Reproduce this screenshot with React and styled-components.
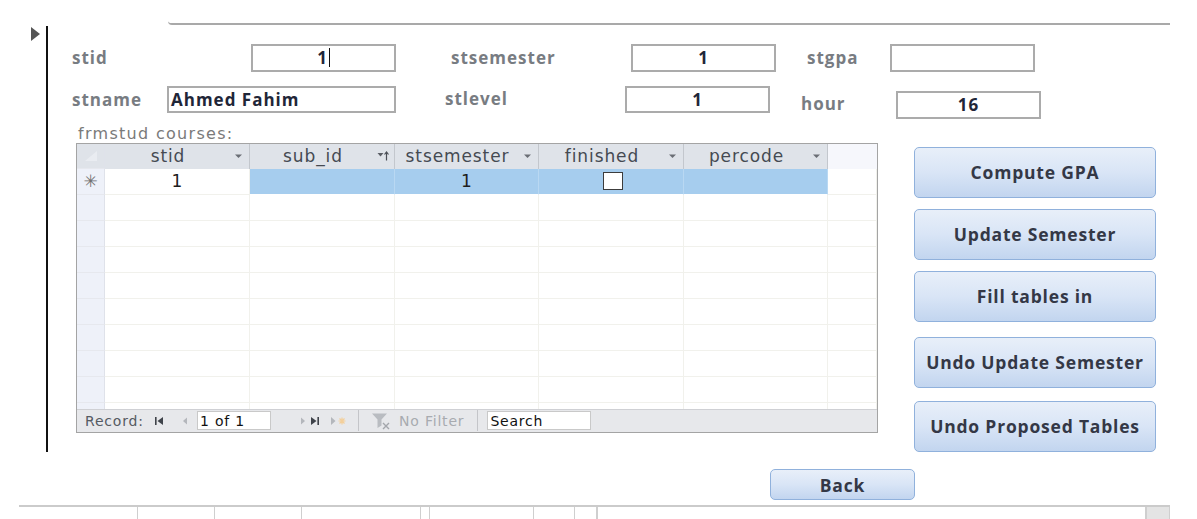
import React from 'react';
import styled, {createGlobalStyle} from 'styled-components';

const GlobalStyle = createGlobalStyle`
    html, body {
        margin: 0;
        padding: 0;
        background: #ffffff;
    }
    body {
        font-family: "Open Sans", "Liberation Sans", sans-serif;
    }
`;

const Page = styled.div`
    width: 1197px;
    height: 519px;
    overflow: hidden;
    display: flex;
    flex-direction: column;
`;

const TopRule = styled.div`
    margin-left: 168px;
    margin-top: 2px;
    width: 1002px;
    height: 21px;
    border-bottom: 2px solid #a9a9a9;
    border-bottom-left-radius: 4px;
`;

const Body = styled.div`
    display: flex;
    height: 429px;
    margin-top: 1px;
`;

const Gutter = styled.div`
    width: 46px;
    display: flex;
    justify-content: flex-end;
    padding-right: 6px;
    box-sizing: border-box;
    padding-top: 1px;
`;

const RecordArrow = styled.div`
    width: 0;
    height: 0;
    border-top: 7px solid transparent;
    border-bottom: 7px solid transparent;
    border-left: 9px solid #555555;
`;

const FormArea = styled.div`
    flex: 1;
    border-left: 2px solid #111111;
    display: flex;
    flex-direction: column;
    padding-top: 18px;
`;

const FieldRow = styled.div`
    display: flex;
    align-items: flex-start;
    padding-left: 24px;
    margin-top: ${p => p.$mt || 0}px;
`;

const Group = styled.div`
    display: flex;
    align-items: center;
    margin-left: ${p => p.$gap || 0}px;
    margin-top: ${p => p.$shift || 0}px;
`;

const Label = styled.div`
    width: ${p => p.$w}px;
    font-family: "Open Sans", "Liberation Sans", sans-serif;
    font-weight: 700;
    font-size: 17px;
    letter-spacing: 1px;
    color: #787c82;
    box-sizing: border-box;
    margin-top: ${p => p.$lift || 0}px;
`;

const Field = styled.div`
    width: ${p => p.$w || 145}px;
    height: ${p => p.$h || 28}px;
    box-sizing: border-box;
    border: 2px solid #ababab;
    background: #ffffff;
    display: flex;
    align-items: center;
    justify-content: ${p => (p.$left ? 'flex-start' : 'center')};
    padding-left: ${p => (p.$left ? 2 : 0)}px;
    font-family: "Open Sans", "Liberation Sans", sans-serif;
    font-weight: 700;
    font-size: 17px;
    letter-spacing: 1px;
    color: #1f2638;
`;

const Caret = styled.span`
    display: inline-block;
    width: 1px;
    height: 19px;
    background: #111111;
    margin-left: 1px;
`;

const Main = styled.div`
    display: flex;
    align-items: flex-start;
    margin-top: 5px;
    padding-left: 28px;
`;

const SubformBlock = styled.div`
    display: flex;
    flex-direction: column;
    width: 802px;
`;

const SubformTitle = styled.div`
    font-family: "DejaVu Sans", "Liberation Sans", sans-serif;
    font-size: 16px;
    letter-spacing: 1.3px;
    line-height: 19px;
    color: #7a7a7a;
    padding-left: 2px;
`;

const Datasheet = styled.div`
    height: 290px;
    border: 1px solid #a4a4a4;
    box-sizing: border-box;
    display: flex;
    flex-direction: column;
    background: #ffffff;
    font-family: "DejaVu Sans", "Liberation Sans", sans-serif;
`;

const cols = '28px 145px 145px 144px 145px 144px 1fr';

const HeaderRow = styled.div`
    display: grid;
    grid-template-columns: ${cols};
    height: 25px;
    flex-shrink: 0;
`;

const HeadCell = styled.div`
    background: ${p => (p.$blank ? '#f6f7fc' : '#dfe3e9')};
    border-right: ${p => (p.$blank ? 'none' : '1px solid #c3c7cd')};
    display: flex;
    align-items: center;
    font-size: 17px;
    letter-spacing: 0.9px;
    color: #454a52;
    overflow: hidden;
`;

const HeadText = styled.span`
    flex: 1;
    text-align: center;
    padding-left: 4px;
`;

const HeadIcon = styled.span`
    width: 22px;
    display: flex;
    align-items: center;
    justify-content: center;
`;

const BodyArea = styled.div`
    flex: 1;
    overflow: hidden;
`;

const DataRow = styled.div`
    display: grid;
    grid-template-columns: ${cols};
    height: ${p => p.$h || 26}px;
`;

const Cell = styled.div`
    box-sizing: border-box;
    background: ${p => (p.$sel ? '#a6cdee' : '#ffffff')};
    border-right: 1px solid ${p => (p.$sel ? '#b9d8f2' : '#f1f1ec')};
    border-bottom: 1px solid ${p => (p.$sel ? '#ffffff' : '#f1f1ec')};
    display: flex;
    align-items: center;
    justify-content: center;
    font-size: 17px;
    color: #1d1d1d;
`;

const Selector = styled.div`
    box-sizing: border-box;
    background: ${p => (p.$head ? '#dfe3e9' : '#eef1f9')};
    border-right: 1px solid #dfe2ea;
    border-bottom: 1px solid #e6e8ee;
    display: flex;
    align-items: center;
    justify-content: center;
    font-size: 17px;
    color: #707070;
`;

const CheckBox = styled.span`
    width: 18px;
    height: 16px;
    border: 1.5px solid #3c3c3c;
    background: #ffffff;
    margin-left: 3px;
`;

const NavBar = styled.div`
    height: 23px;
    flex-shrink: 0;
    background: #e7e8eb;
    border-top: 1px solid #cfd0d4;
    box-sizing: border-box;
    display: flex;
    align-items: center;
    font-size: 14px;
    letter-spacing: 0.8px;
    color: #555a62;
`;

const NavLabel = styled.span`
    padding-left: 8px;
    width: 69px;
`;

const NavBtn = styled.span`
    display: flex;
    align-items: center;
    margin-left: ${p => p.$ml || 0}px;
`;

const NavBox = styled.div`
    width: ${p => p.$w}px;
    height: 19px;
    box-sizing: border-box;
    border: 1px solid #c9c9c9;
    background: #ffffff;
    color: #111111;
    display: flex;
    align-items: center;
    padding-left: 2px;
    margin-left: ${p => p.$ml || 0}px;
`;

const NavSep = styled.span`
    width: 1px;
    height: 21px;
    background: #c4c5c9;
    margin-left: ${p => p.$ml || 0}px;
`;

const FilterText = styled.span`
    color: #a8abb0;
    margin-left: 6px;
`;

const ButtonColumn = styled.div`
    display: flex;
    flex-direction: column;
    margin-left: 36px;
    margin-top: 23px;
`;

const ActionButton = styled.button`
    width: ${p => p.$w || 242}px;
    height: ${p => p.$h || 51}px;
    margin-top: ${p => p.$mt || 0}px;
    border: 1px solid #90b1dc;
    border-radius: 5px;
    background: linear-gradient(to bottom, #e8eff9 0%, #d9e5f6 50%, #c2d5ef 100%);
    font-family: "Open Sans", "Liberation Sans", sans-serif;
    font-weight: 700;
    font-size: 17.5px;
    letter-spacing: 0.8px;
    color: #343846;
    cursor: pointer;
    padding: 0;
`;

const BackRow = styled.div`
    display: flex;
    padding-left: 770px;
    margin-top: 17px;
`;

const StatusStrip = styled.div`
    margin-top: 5px;
    margin-left: 19px;
    width: 1151px;
    height: 12px;
    border-top: 2px solid #cbcbcb;
    display: flex;
`;

const StatusSeg = styled.div`
    width: ${p => p.$w}px;
    margin-left: ${p => p.$ml || 0}px;
    border-left: 1px solid #cfcfcf;
    border-right: 1px solid #cfcfcf;
    background: ${p => p.$fill || 'transparent'};
`;

const SortDown = () => (
    <svg width="9" height="6" viewBox="0 0 9 6">
        <path d="M1 1.5h7L4.5 5z" fill="#6a6e75"/>
    </svg>
);

const SortAsc = () => (
    <svg width="13" height="10" viewBox="0 0 13 10">
        <path d="M0.5 2h6L3.5 5.5z" fill="#5a5e65"/>
        <path d="M9.5 9.5V1.5M7.5 3.5l2-2.5 2 2.5" stroke="#4a4e55" strokeWidth="1.2" fill="none"/>
    </svg>
);

const CornerMark = () => (
    <svg width="14" height="12" viewBox="0 0 14 12">
        <path d="M13 1L1 11h12z" fill="#e9ecf1"/>
    </svg>
);

const FirstIcon = () => (
    <svg width="10" height="10" viewBox="0 0 10 10">
        <rect x="1" y="1" width="1.6" height="8" fill="#3f434a"/>
        <path d="M9 1v8L3.5 5z" fill="#3f434a"/>
    </svg>
);

const PrevIcon = () => (
    <svg width="8" height="10" viewBox="0 0 8 10">
        <path d="M6 1.5v7L2 5z" fill="#b4b7bc"/>
    </svg>
);

const NextIcon = () => (
    <svg width="8" height="10" viewBox="0 0 8 10">
        <path d="M2 1.5v7L6 5z" fill="#b4b7bc"/>
    </svg>
);

const LastIcon = () => (
    <svg width="10" height="10" viewBox="0 0 10 10">
        <path d="M1 1v8L6.5 5z" fill="#3f434a"/>
        <rect x="7.4" y="1" width="1.6" height="8" fill="#3f434a"/>
    </svg>
);

const NewIcon = () => (
    <svg width="18" height="12" viewBox="0 0 18 12">
        <path d="M1 2v8L5.5 6z" fill="#b4b7bc"/>
        <path d="M12 2.5v7M8.5 6h7M9.5 3.5l5 5M14.5 3.5l-5 5" stroke="#f3cf9b" strokeWidth="1.2"/>
    </svg>
);

const FilterIcon = () => (
    <svg width="22" height="18" viewBox="0 0 22 18">
        <path d="M1 1.5h15l-5.5 6v6l-4 2.5v-8.5z" fill="#b9bcc1"/>
        <path d="M12 11l6 6M18 11l-6 6" stroke="#a3a6ab" strokeWidth="1.4"/>
    </svg>
);

const headers = [
    {name: 'stid', icon: <SortDown/>},
    {name: 'sub_id', icon: <SortAsc/>},
    {name: 'stsemester', icon: <SortDown/>},
    {name: 'finished', icon: <SortDown/>},
    {name: 'percode', icon: <SortDown/>},
];

const actions = [
    {label: 'Compute GPA', mt: 0},
    {label: 'Update Semester', mt: 11},
    {label: 'Fill tables in', mt: 11},
    {label: 'Undo Update Semester', mt: 15},
    {label: 'Undo Proposed Tables', mt: 13},
];

const App = () => {
    const emptyRows = Array.from({length: 10});

    return (
        <Page>
            <GlobalStyle/>
            <TopRule/>
            <Body>
                <Gutter>
                    <RecordArrow/>
                </Gutter>
                <FormArea>
                    <FieldRow>
                        <Group>
                            <Label $w={179}>stid</Label>
                            <Field>1<Caret/></Field>
                        </Group>
                        <Group $gap={55}>
                            <Label $w={180}>stsemester</Label>
                            <Field>1</Field>
                        </Group>
                        <Group $gap={31}>
                            <Label $w={83}>stgpa</Label>
                            <Field/>
                        </Group>
                    </FieldRow>
                    <FieldRow $mt={14}>
                        <Group>
                            <Label $w={95}>stname</Label>
                            <Field $w={229} $h={27} $left>Ahmed Fahim</Field>
                        </Group>
                        <Group $gap={49}>
                            <Label $w={180} $lift={-2}>stlevel</Label>
                            <Field $h={27}>1</Field>
                        </Group>
                        <Group $gap={31} $shift={5}>
                            <Label $w={95} $lift={-2}>hour</Label>
                            <Field>16</Field>
                        </Group>
                    </FieldRow>
                    <Main>
                        <SubformBlock>
                            <SubformTitle>frmstud courses:</SubformTitle>
                            <Datasheet>
                                <HeaderRow>
                                    <Selector $head><CornerMark/></Selector>
                                    {headers.map(h => (
                                        <HeadCell key={h.name}>
                                            <HeadText>{h.name}</HeadText>
                                            <HeadIcon>{h.icon}</HeadIcon>
                                        </HeadCell>
                                    ))}
                                    <HeadCell $blank/>
                                </HeaderRow>
                                <BodyArea>
                                    <DataRow $h={26}>
                                        <Selector>✳</Selector>
                                        <Cell>1</Cell>
                                        <Cell $sel/>
                                        <Cell $sel>1</Cell>
                                        <Cell $sel><CheckBox/></Cell>
                                        <Cell $sel/>
                                        <Cell/>
                                    </DataRow>
                                    {emptyRows.map((_, i) => (
                                        <DataRow key={i}>
                                            <Selector/>
                                            <Cell/>
                                            <Cell/>
                                            <Cell/>
                                            <Cell/>
                                            <Cell/>
                                            <Cell/>
                                        </DataRow>
                                    ))}
                                </BodyArea>
                                <NavBar>
                                    <NavLabel>Record:</NavLabel>
                                    <NavBtn><FirstIcon/></NavBtn>
                                    <NavBtn $ml={17}><PrevIcon/></NavBtn>
                                    <NavBox $w={74} $ml={8}>1 of 1</NavBox>
                                    <NavBtn $ml={28}><NextIcon/></NavBtn>
                                    <NavBtn $ml={3}><LastIcon/></NavBtn>
                                    <NavBtn $ml={10}><NewIcon/></NavBtn>
                                    <NavSep $ml={10}/>
                                    <NavBtn $ml={12}><FilterIcon/></NavBtn>
                                    <FilterText>No Filter</FilterText>
                                    <NavSep $ml={13}/>
                                    <NavBox $w={104} $ml={9}>Search</NavBox>
                                </NavBar>
                            </Datasheet>
                        </SubformBlock>
                        <ButtonColumn>
                            {actions.map(a => (
                                <ActionButton key={a.label} $mt={a.mt}>{a.label}</ActionButton>
                            ))}
                        </ButtonColumn>
                    </Main>
                </FormArea>
            </Body>
            <BackRow>
                <ActionButton $w={145} $h={31}>Back</ActionButton>
            </BackRow>
            <StatusStrip>
                <StatusSeg $w={76} $ml={118}/>
                <StatusSeg $w={119} $ml={86}/>
                <StatusSeg $w={104} $ml={8}/>
                <StatusSeg $w={21} $ml={40}/>
                <StatusSeg $w={550}/>
                <StatusSeg $w={22} $fill="#e4e4e4"/>
            </StatusStrip>
        </Page>
    );
};

export default App;
